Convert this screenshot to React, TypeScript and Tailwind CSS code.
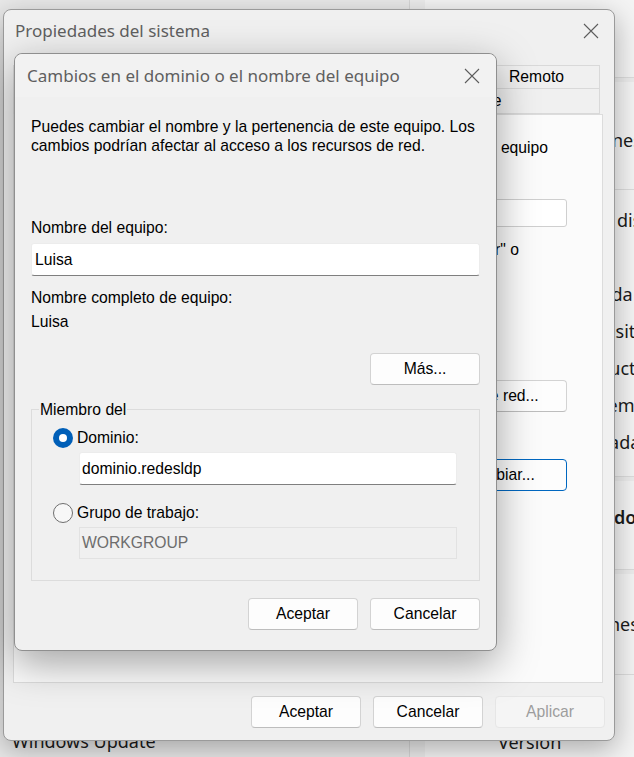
import React from "react";

function CloseIcon() {
  return (
    <svg width="16" height="16" viewBox="0 0 16 16" className="block">
      <path d="M1 1 L15 15 M15 1 L1 15" stroke="#5c5c5c" strokeWidth="1.1" fill="none" />
    </svg>
  );
}

function Btn({ children, className = "" }: { children: React.ReactNode; className?: string }) {
  return (
    <div
      className={
        "flex items-center justify-center rounded-[4px] border border-[#d3d3d3] border-b-[#bdbdbd] bg-[#fdfdfd] text-[15.7px] text-black " +
        className
      }
    >
      {children}
    </div>
  );
}

function SettingsBackground() {
  return (
    <div className="flex h-full font-['Noto_Sans',sans-serif] text-[18px] text-[#1b1b1b]">
      <nav className="flex h-full w-[410px] shrink-0 flex-col justify-end border-r border-[#d6d6d6] bg-[#e9e9e9] pb-[2px] pl-[12px]">
        <div className="flex h-[28px] items-center whitespace-nowrap">Windows Update</div>
      </nav>
      <main className="min-w-0 flex-1 overflow-hidden bg-[#ececec] pl-[15px]">
        <div className="flex w-[400px] flex-col">
          <div className="h-[78px] border-b border-[#dcdcdc] bg-[#f4f4f4]" />
          <div className="mt-[4px] flex h-[108px] items-center border-b border-[#dcdcdc] bg-[#f4f4f4] pl-[80px] pt-[10px] whitespace-nowrap">
            Especificaciones del dispositivo
          </div>
          <div className="flex h-[287px] flex-col border-b border-[#dcdcdc] bg-[#f4f4f4] pl-[87px] pt-[12px] whitespace-nowrap">
            <div className="h-[37px] leading-[37px]">Nombre del dispositivo</div>
            <div className="h-[37px] leading-[37px]">Procesador</div>
            <div className="h-[37px] leading-[37px]">RAM instalada</div>
            <div className="h-[37px] leading-[37px]">Id. del dispositivo</div>
            <div className="h-[37px] leading-[37px]">Id. del producto</div>
            <div className="h-[37px] leading-[37px]">Tipo de sistema</div>
            <div className="h-[37px] leading-[37px]">Lápiz y entrada táctil</div>
          </div>
          <div className="mt-[4px] h-[89px] border-b border-[#dcdcdc] bg-[#f4f4f4] pl-[30px] pt-[23px] whitespace-nowrap">
            <span className="font-semibold leading-[24px]">Vínculos relacionados</span>
          </div>
          <div className="mt-[4px] flex h-[101px] items-center border-b border-[#dcdcdc] bg-[#f4f4f4] pl-[77px] whitespace-nowrap">
            Especificaciones de Windows
          </div>
          <div className="flex flex-col bg-[#f4f4f4] pl-[73px] pt-[12px] whitespace-nowrap">
            <div className="h-[37px] leading-[37px]">Edición</div>
            <div className="h-[37px] leading-[37px]">Versión</div>
          </div>
        </div>
      </main>
    </div>
  );
}

function OuterDialog() {
  return (
    <div className="absolute left-[3px] top-[9px] flex h-[732px] w-[612px] flex-col rounded-[8px] border border-[#9a9a9a] bg-[#f0f0f0] shadow-[0_8px_28px_rgba(0,0,0,0.3)] font-['Liberation_Sans',Arial,sans-serif] text-[15.7px] text-black">
      <div className="flex h-[42px] items-center justify-between pl-[11px] pr-[15px]">
        <span className="font-['Noto_Sans',sans-serif] text-[17px] text-[#5f5f5f]">Propiedades del sistema</span>
        <CloseIcon />
      </div>
      <div className="ml-[9px] mt-[13px] flex w-[587px] flex-col">
        <div className="flex h-[24px]">
          <div className="flex flex-1 items-center justify-center border border-[#d9d9d9] bg-[#f0f0f0]">Opciones avanzadas</div>
          <div className="flex flex-1 items-center justify-center border border-l-0 border-[#d9d9d9] bg-[#f0f0f0]">Protección del sistema</div>
          <div className="flex w-[126px] items-center justify-center border border-l-0 border-[#d9d9d9] bg-[#f0f0f0]">Remoto</div>
        </div>
        <div className="flex h-[25px]">
          <div className="flex w-[333px] items-center justify-center border border-t-0 border-[#d9d9d9] bg-[#fbfbfb]">Nombre de equipo</div>
          <div className="flex flex-1 items-center justify-center border border-l-0 border-t-0 border-[#d9d9d9] bg-[#f0f0f0] pr-[10px]">Hardware</div>
        </div>
      </div>
      <div className="ml-[9px] flex h-[569px] w-[590px] flex-col border border-[#dcdcdc] bg-[#fbfbfb] pl-[20px] pr-[35px] pt-[23px]">
        <p className="pr-[19px] text-right leading-[19px] whitespace-nowrap">
          Windows usa la siguiente información para identificar su equipo
        </p>
        <div className="mt-[42px] flex items-center justify-between">
          <span>Descripción del equipo:</span>
          <div className="h-[28px] w-[300px] rounded-[3px] border border-[#cfcfcf] bg-white" />
        </div>
        <p className="mt-[13px] pr-[48px] text-right leading-[19px] whitespace-nowrap">
          Por ejemplo: "Equipo del comedor" o
        </p>
        <div className="mt-[121px] flex justify-end">
          <Btn className="h-[32px] w-[136px]">Id. de red...</Btn>
        </div>
        <div className="mt-[47px] flex justify-end">
          <Btn className="h-[32px] w-[136px] !border-[#0067c0]">Cambiar...</Btn>
        </div>
      </div>
      <div className="mt-[13px] flex justify-end gap-[12px] pr-[9px]">
        <Btn className="h-[32px] w-[110px]">Aceptar</Btn>
        <Btn className="h-[32px] w-[110px]">Cancelar</Btn>
        <div className="flex h-[32px] w-[110px] items-center justify-center rounded-[4px] border border-[#e6e6e6] bg-[#f5f5f5] text-[#9d9d9d]">
          Aplicar
        </div>
      </div>
    </div>
  );
}

function InnerDialog() {
  return (
    <div className="absolute left-[14px] top-[53px] flex h-[598px] w-[483px] flex-col rounded-[8px] border border-[#8f8f8f] bg-[#f0f0f0] shadow-[0_12px_40px_rgba(0,0,0,0.36)] font-['Liberation_Sans',Arial,sans-serif] text-[15.7px] text-black">
      <div className="flex h-[43px] items-center justify-between rounded-t-[8px] bg-[#f2f2f2] pl-[12px] pr-[16px]">
        <span className="font-['Noto_Sans',sans-serif] text-[17px] text-[#5f5f5f] whitespace-nowrap">
          Cambios en el dominio o el nombre del equipo
        </span>
        <CloseIcon />
      </div>
      <div className="flex flex-col px-[16px] pt-[20px]">
        <p className="leading-[19px] whitespace-nowrap">
          Puedes cambiar el nombre y la pertenencia de este equipo. Los
          <br />
          cambios podrían afectar al acceso a los recursos de red.
        </p>
        <div className="mt-[63px] leading-[19px]">Nombre del equipo:</div>
        <div className="mt-[6px] flex h-[33px] items-center rounded-[3px] border border-[#ececec] border-b-[#7f7f7f] bg-white pl-[3px]">
          Luisa
        </div>
        <div className="mt-[12px] leading-[19px]">Nombre completo de equipo:</div>
        <div className="mt-[5px] leading-[19px]">Luisa</div>
        <div className="mt-[22px] flex justify-end">
          <Btn className="h-[32px] w-[110px]">Más...</Btn>
        </div>
        <fieldset className="mt-[15px] h-[181px] border border-[#dcdcdc] pl-[7px] pr-[7px]">
          <legend className="px-[1px] leading-[19px]">Miembro del</legend>
          <div className="ml-[14px] mt-[9px] flex h-[20px] items-center gap-[4px]">
            <div className="flex h-[20px] w-[20px] items-center justify-center rounded-full bg-[#005fb8]">
              <div className="h-[8px] w-[8px] rounded-full bg-white" />
            </div>
            <span>Dominio:</span>
          </div>
          <div className="ml-[40px] mt-[4px] flex h-[33px] w-[378px] items-center rounded-[3px] border border-[#ececec] border-b-[#7f7f7f] bg-white pl-[2px]">
            dominio.redesldp
          </div>
          <div className="ml-[14px] mt-[18px] flex h-[20px] items-center gap-[4px]">
            <div className="h-[20px] w-[20px] rounded-full border border-[#6e6e6e] bg-[#f7f7f7]" />
            <span>Grupo de trabajo:</span>
          </div>
          <div className="ml-[40px] mt-[4px] flex h-[32px] w-[378px] items-center border border-[#e2e2e2] bg-[#f0f0f0] pl-[2px] text-[#6d6d6d]">
            WORKGROUP
          </div>
        </fieldset>
        <div className="mt-[17px] flex justify-end gap-[12px]">
          <Btn className="h-[32px] w-[110px]">Aceptar</Btn>
          <Btn className="h-[32px] w-[110px]">Cancelar</Btn>
        </div>
      </div>
    </div>
  );
}

export default function App() {
  return (
    <div className="relative h-[757px] w-[634px] overflow-hidden bg-[#ebebeb]">
      <SettingsBackground />
      <OuterDialog />
      <InnerDialog />
    </div>
  );
}
